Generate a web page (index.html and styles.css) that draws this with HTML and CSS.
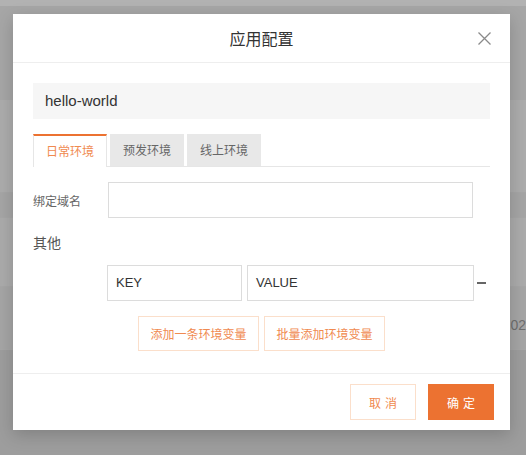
FILE: index.html
```html
<!DOCTYPE html>
<html lang="zh-CN">
<head>
<meta charset="utf-8">
<title>应用配置</title>
<link rel="stylesheet" href="styles.css">
</head>
<body>
<div class="page">
  <div class="bg-top"></div>
  <div class="bg-nav"></div>
  <div class="bg-main">
    <div class="bg-row bg-row-a"></div>
    <div class="bg-row bg-row-b"></div>
    <div class="bg-row bg-row-c"></div>
    <div class="bg-row bg-row-d"><span class="bg-text">02</span></div>
  </div>
  <div class="bg-foot"></div>
</div>

<div class="modal">
  <div class="modal-header">
    <span class="modal-title">应用配置</span>
    <svg class="close" width="13" height="13" viewBox="0 0 13 13"><path d="M0.5 0.5 L12.5 12.5 M12.5 0.5 L0.5 12.5" stroke="#8a8a8a" stroke-width="1.3" fill="none"/></svg>
  </div>
  <div class="modal-body">
    <div class="app-name">hello-world</div>
    <div class="tabs">
      <div class="tab active">日常环境</div>
      <div class="tab">预发环境</div>
      <div class="tab">线上环境</div>
    </div>
    <div class="form-row">
      <label class="form-label">绑定域名</label>
      <div class="input input-domain"></div>
    </div>
    <div class="section-title">其他</div>
    <div class="kv-row">
      <div class="input input-key">KEY</div>
      <div class="input input-value">VALUE</div>
      <span class="minus"></span>
    </div>
    <div class="actions">
      <button class="btn-outline">添加一条环境变量</button>
      <button class="btn-outline">批量添加环境变量</button>
    </div>
  </div>
  <div class="modal-footer">
    <button class="btn-outline btn-footer">取消</button>
    <button class="btn-primary btn-footer">确定</button>
  </div>
</div>
</body>
</html>
```

FILE: styles.css
```css
* { box-sizing: border-box; }
html, body { margin: 0; padding: 0; }
body {
  width: 526px;
  height: 455px;
  overflow: hidden;
  font-family: "Liberation Sans", "Noto Sans CJK SC", sans-serif;
  color: #333;
  position: relative;
  background: #9e9e9e;
}
.page { width: 526px; height: 455px; display: flex; flex-direction: column; }
.bg-top { height: 6px; background: #b2b2b2; }
.bg-nav { height: 94px; background: #a6a6a6; }
.bg-main { height: 250px; background: #acacac; display: flex; flex-direction: column; }
.bg-row { border-bottom: 1px solid #a6a6a6; }
.bg-row-a { height: 93px; }
.bg-row-b { height: 25px; background: #a5a5a5; }
.bg-row-c { height: 69px; background: #ababab; }
.bg-row-d { flex: 1; background: #a5a5a5; display: flex; justify-content: flex-end; align-items: center; overflow: hidden; }
.bg-text { font-size: 14px; color: #6e6e6e; margin-right: 0; padding-top: 14px; }
.bg-foot { flex: 1; background: #9d9d9d; }

.modal {
  position: absolute;
  top: 14px;
  left: 13px;
  width: 497px;
  height: 416px;
  background: #fff;
  box-shadow: 0 5px 16px rgba(0,0,0,0.18);
  display: flex;
  flex-direction: column;
}
.modal-header {
  height: 49px;
  border-bottom: 1px solid #eeeeee;
  display: flex;
  align-items: center;
  justify-content: center;
  position: relative;
}
.modal-title {
  font-family: "Noto Sans CJK SC", sans-serif;
  font-size: 16px;
  line-height: 20px;
  color: #333;
}
.close { position: absolute; right: 19px; top: 18px; }

.modal-body { padding: 20px 20px 22px; border-bottom: 1px solid #eeeeee; }
.app-name {
  height: 36px;
  background: #f6f6f6;
  padding-left: 12px;
  font-size: 15px;
  line-height: 36px;
  color: #333;
}
.tabs {
  margin-top: 15px;
  height: 33px;
  display: flex;
  gap: 3px;
  border-bottom: 1px solid #e6e6e6;
}
.tab {
  width: 74px;
  height: 32px;
  background: #e8e8e8;
  font-family: "Noto Sans CJK SC", sans-serif;
  font-size: 12px;
  line-height: 32px;
  text-align: center;
  color: #666;
}
.tab.active {
  background: #fff;
  border-top: 2px solid #ec7231;
  border-left: 1px solid #e6e6e6;
  border-right: 1px solid #e6e6e6;
  height: 33px;
  line-height: 29px;
  color: #f08a50;
}

.form-row { margin-top: 15px; display: flex; align-items: center; }
.form-label {
  width: 75px;
  font-family: "Noto Sans CJK SC", sans-serif;
  font-size: 12px;
  color: #666;
}
.input {
  height: 36px;
  border: 1px solid #dcdcdc;
  background: #fff;
  font-size: 13px;
  line-height: 34px;
  padding-left: 8px;
  color: #333;
}
.input-domain { width: 365px; }
.section-title {
  margin-top: 14px;
  font-family: "Noto Sans CJK SC", sans-serif;
  font-size: 14px;
  line-height: 20px;
  color: #555;
}
.kv-row { margin-top: 13px; padding-left: 74px; display: flex; align-items: center; }
.input-key { width: 135px; }
.input-value { width: 227px; margin-left: 5px; }
.minus { width: 9px; height: 2px; background: #666; margin-left: 3px; }

.actions { margin-top: 15px; padding-left: 105px; display: flex; gap: 5px; }
.btn-outline {
  height: 35px;
  background: #fff;
  border: 1px solid #fbdfcb;
  color: #f08a50;
  font-family: "Noto Sans CJK SC", sans-serif;
  font-size: 12px;
  padding: 0;
  width: 121px;
  white-space: nowrap;
  cursor: pointer;
}
.modal-footer {
  flex: 1;
  display: flex;
  justify-content: flex-end;
  align-items: center;
  gap: 12px;
  padding: 0 16px;
}
.btn-footer {
  width: 66px;
  height: 36px;
  padding: 0 0 0 4px;
  font-family: "Noto Sans CJK SC", sans-serif;
  font-size: 12px;
  letter-spacing: 4px;
}
.btn-primary {
  background: #ec7231;
  border: 1px solid #ec7231;
  color: #fff;
  cursor: pointer;
}
```
